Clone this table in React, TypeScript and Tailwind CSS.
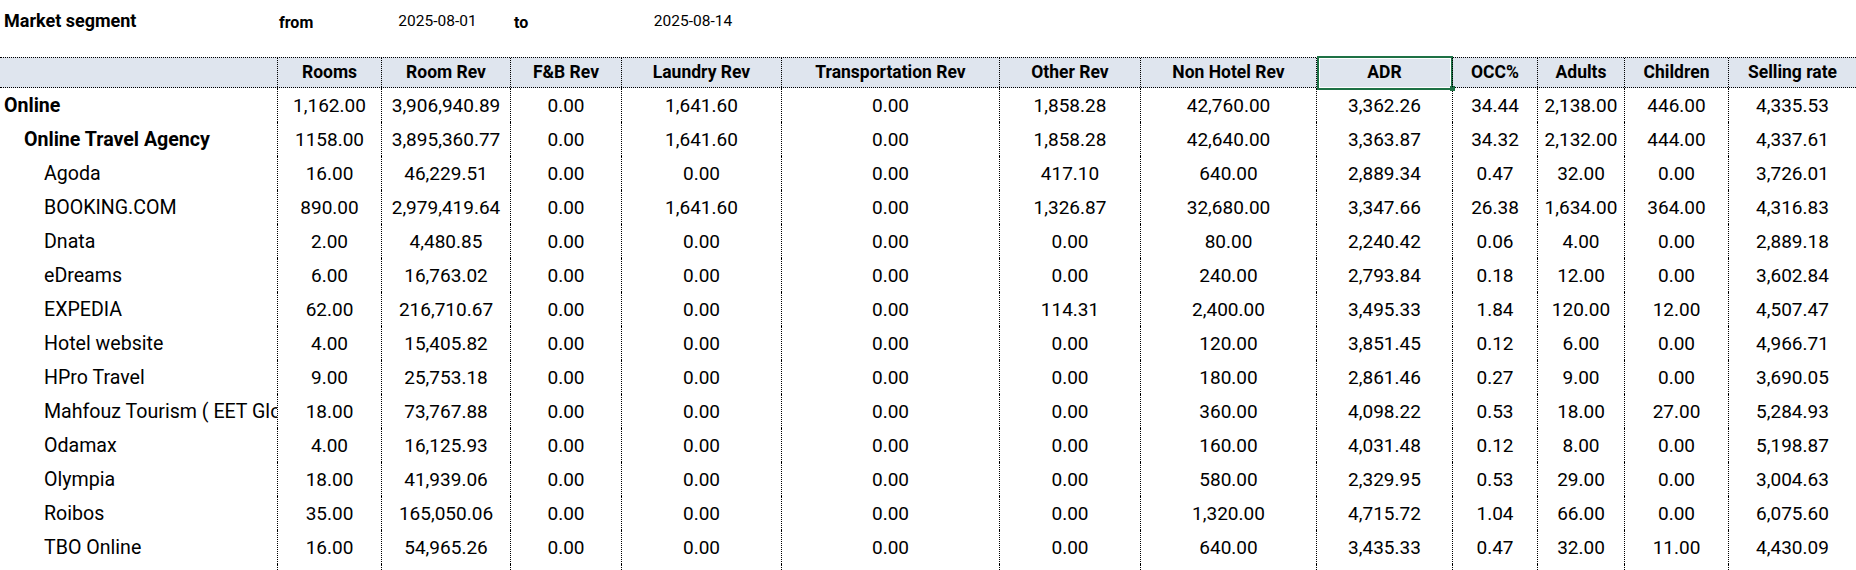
import React from "react";

const cols =
  "grid grid-cols-[277px_104px_129px_111px_160px_218px_141px_176px_136px_85px_87px_104px_128px]";

const headers = [
  "Rooms",
  "Room Rev",
  "F&B Rev",
  "Laundry Rev",
  "Transportation Rev",
  "Other Rev",
  "Non Hotel Rev",
  "ADR",
  "OCC%",
  "Adults",
  "Children",
  "Selling rate",
];

type Row = { name: string; level: 0 | 1 | 2; values: string[] };

const rows: Row[] = [
  { name: "Online", level: 0, values: ["1,162.00", "3,906,940.89", "0.00", "1,641.60", "0.00", "1,858.28", "42,760.00", "3,362.26", "34.44", "2,138.00", "446.00", "4,335.53"] },
  { name: "Online Travel Agency", level: 1, values: ["1158.00", "3,895,360.77", "0.00", "1,641.60", "0.00", "1,858.28", "42,640.00", "3,363.87", "34.32", "2,132.00", "444.00", "4,337.61"] },
  { name: "Agoda", level: 2, values: ["16.00", "46,229.51", "0.00", "0.00", "0.00", "417.10", "640.00", "2,889.34", "0.47", "32.00", "0.00", "3,726.01"] },
  { name: "BOOKING.COM", level: 2, values: ["890.00", "2,979,419.64", "0.00", "1,641.60", "0.00", "1,326.87", "32,680.00", "3,347.66", "26.38", "1,634.00", "364.00", "4,316.83"] },
  { name: "Dnata", level: 2, values: ["2.00", "4,480.85", "0.00", "0.00", "0.00", "0.00", "80.00", "2,240.42", "0.06", "4.00", "0.00", "2,889.18"] },
  { name: "eDreams", level: 2, values: ["6.00", "16,763.02", "0.00", "0.00", "0.00", "0.00", "240.00", "2,793.84", "0.18", "12.00", "0.00", "3,602.84"] },
  { name: "EXPEDIA", level: 2, values: ["62.00", "216,710.67", "0.00", "0.00", "0.00", "114.31", "2,400.00", "3,495.33", "1.84", "120.00", "12.00", "4,507.47"] },
  { name: "Hotel website", level: 2, values: ["4.00", "15,405.82", "0.00", "0.00", "0.00", "0.00", "120.00", "3,851.45", "0.12", "6.00", "0.00", "4,966.71"] },
  { name: "HPro Travel", level: 2, values: ["9.00", "25,753.18", "0.00", "0.00", "0.00", "0.00", "180.00", "2,861.46", "0.27", "9.00", "0.00", "3,690.05"] },
  { name: "Mahfouz Tourism ( EET Global )", level: 2, values: ["18.00", "73,767.88", "0.00", "0.00", "0.00", "0.00", "360.00", "4,098.22", "0.53", "18.00", "27.00", "5,284.93"] },
  { name: "Odamax", level: 2, values: ["4.00", "16,125.93", "0.00", "0.00", "0.00", "0.00", "160.00", "4,031.48", "0.12", "8.00", "0.00", "5,198.87"] },
  { name: "Olympia", level: 2, values: ["18.00", "41,939.06", "0.00", "0.00", "0.00", "0.00", "580.00", "2,329.95", "0.53", "29.00", "0.00", "3,004.63"] },
  { name: "Roibos", level: 2, values: ["35.00", "165,050.06", "0.00", "0.00", "0.00", "0.00", "1,320.00", "4,715.72", "1.04", "66.00", "0.00", "6,075.60"] },
  { name: "TBO Online", level: 2, values: ["16.00", "54,965.26", "0.00", "0.00", "0.00", "0.00", "640.00", "3,435.33", "0.47", "32.00", "11.00", "4,430.09"] },
];

const indent = ["pl-[4px] font-bold", "pl-[24px] font-bold", "pl-[44px]"];

export default function App() {
  return (
    <div className="h-[570px] w-[1856px] overflow-hidden bg-white text-black font-['Roboto','Liberation_Sans',sans-serif]">
      {/* filter line */}
      <div className={`${cols} h-[57px]`}>
        <div className="pl-[4px] pt-[12px] text-[18px] font-bold leading-none">Market segment</div>
        <div className="pl-[2px] pt-[15px] text-[16px] font-bold leading-none">from</div>
        <div className="pr-4 pt-[14px] text-center text-[15.5px] leading-none">2025-08-01</div>
        <div className="pl-[4px] pt-[15px] text-[16px] font-bold leading-none">to</div>
        <div className="pr-4 pt-[14px] text-center text-[15.5px] leading-none">2025-08-14</div>
      </div>

      {/* header */}
      <div className={`${cols} h-[31px] border-y border-dotted border-black bg-[#dfe5ee]`}>
        <div />
        {headers.map((h) => (
          <div
            key={h}
            className="relative flex items-center justify-center border-l border-dotted border-black text-[17.5px] font-bold leading-none whitespace-nowrap"
          >
            {h}
            {h === "ADR" && (
              <>
                <div className="absolute -top-[2px] left-0 -right-[1px] -bottom-[3px] border-2 border-[#1e7145] shadow-[inset_0_0_0_1px_white]" />
                <div className="absolute left-[133px] top-[28px] h-[5px] w-[5px] bg-[#1e7145]" />
              </>
            )}
          </div>
        ))}
      </div>

      {/* body */}
      {rows.map((r) => (
        <div key={r.name} className={`${cols} h-[34px] text-[19px] leading-[19px]`}>
          <div className={`flex items-center overflow-hidden whitespace-nowrap text-[19.6px] leading-[19px] ${indent[r.level]}`}>
            {r.name}
          </div>
          {r.values.map((v, i) => (
            <div
              key={i}
              className="flex items-center justify-center border-l border-dotted border-black whitespace-nowrap"
            >
              {v}
            </div>
          ))}
        </div>
      ))}
      <div className={`${cols} h-[34px]`}>
        <div />
        {headers.map((h) => (
          <div key={h} className="border-l border-dotted border-black" />
        ))}
      </div>
    </div>
  );
}
